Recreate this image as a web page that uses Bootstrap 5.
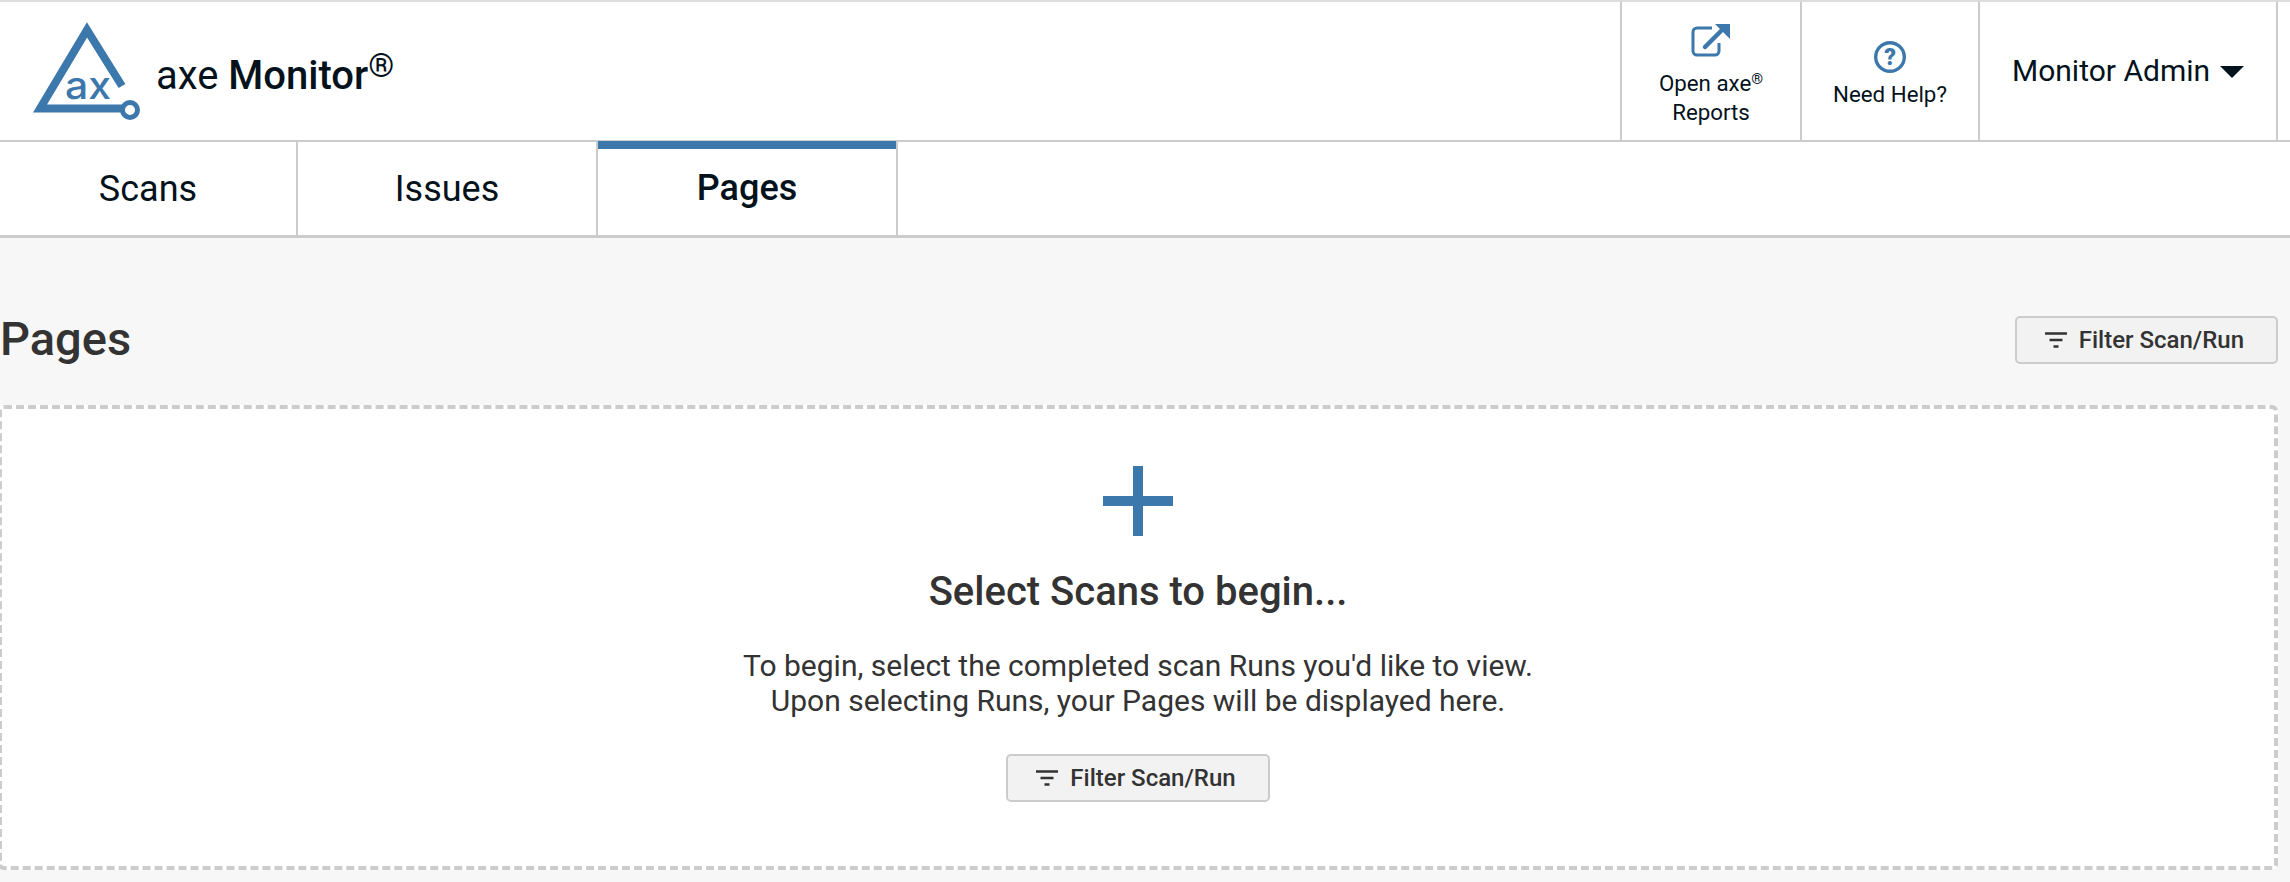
<!DOCTYPE html>
<html lang="en">
<head>
<meta charset="utf-8">
<title>axe Monitor - Pages</title>
<link rel="stylesheet" href="https://cdn.jsdelivr.net/npm/bootstrap@5.3.0/dist/css/bootstrap.min.css">
<style>
body { background:#f7f7f7; font-family:Roboto,"Liberation Sans",sans-serif; color:#333; overflow-x:hidden; }
.ax-top { background:#fff; height:142px; border-top:2px solid #ddd; border-bottom:2px solid #ccc; }
.ax-brand { padding-left:33px; gap:11px; height:100%; text-decoration:none; color:#04121c; font-size:40px; }
.ax-brand svg { margin-top:2px; }
.ax-brand-text { margin-top:10px; }
.ax-brand b { font-weight:500; }
.ax-brand sup { font-size:33px; top:-.36em; line-height:0; vertical-align:baseline; position:relative; }
.ax-cell { border-left:2px solid #ccc; color:#04121c; text-decoration:none; font-size:22.3px; line-height:29px; text-align:center; }
.ax-cell sup { font-size:15px; top:-.45em; }
.ax-open { width:180px; padding-top:21px; }
.ax-open svg { margin-bottom:12px; }
.ax-help { width:178px; padding-top:39px; }
.ax-help svg { margin-bottom:7px; }
.ax-user { width:300px; border-right:2px solid #ccc; margin-right:12px; font-size:30px; padding-left:32px; gap:10px; padding-bottom:2px; }
.ax-caret { width:0; height:0; border-left:12px solid transparent; border-right:12px solid transparent; border-top:12px solid #04121c; margin-top:4px; }
.ax-tabs { background:#fff; height:96px; border-bottom:3px solid #ccc; }
.ax-tab { width:300px; border-right:2px solid #ccc; color:#04121c; font-size:36px; text-decoration:none; height:94px; padding-bottom:1px; }
.ax-tab:first-child { width:298px; }
.ax-tab.ax-on { box-shadow:inset 0 8px 0 #3c78ab; font-weight:500; margin-top:-1px; height:95px; position:relative; }
.ax-title { font-size:47px; font-weight:500; color:#333; margin:-1px 0 1px; }
.ax-head { padding:74px 12px 37px 0; }
.ax-filter { background:#f2f2f2; border:2px solid #ccc; border-radius:5px; color:#333; font-size:24px; font-weight:500; height:48px; gap:12px; padding:0 32px 0 28px; line-height:1; }
.ax-filter:hover { background:#f2f2f2; border-color:#ccc; color:#333; }
.ax-empty { background:#fff; border:4px dashed #ccc; border-radius:6px; margin-left:-2px; margin-right:12px; height:465px; padding-top:57px; }
.ax-empty h2 { font-size:40px; font-weight:500; color:#333; margin:32px 0 0; line-height:48px; }
.ax-empty p { font-size:30px; line-height:35px; color:#333; margin:32px 0 36px; }
</style>
</head>
<body>
<header class="ax-top d-flex">
  <a class="ax-brand d-flex align-items-center flex-grow-1" href="#">
    <svg width="112" height="104" viewBox="33 20 112 104" aria-hidden="true">
      <path d="M122 86 L87 30 L40 108.500 H123" fill="none" stroke="#3c78ab" stroke-width="8"/>
      <circle cx="130" cy="110" r="7.500" fill="#fff" stroke="#3c78ab" stroke-width="5"/>
      <text x="65" y="99" font-family="Inter,Roboto,sans-serif" font-size="38" font-weight="500" fill="#3c78ab" textLength="46" lengthAdjust="spacingAndGlyphs">ax</text>
    </svg>
    <span class="ax-brand-text">axe <b>Monitor</b><sup>®</sup></span>
  </a>
  <a class="ax-cell ax-open d-block" href="#">
    <svg class="d-block mx-auto" width="40" height="34" viewBox="0 0 40 34" aria-hidden="true">
      <path d="M21 5 H6 a4 4 0 0 0 -4 4 V28 a4 4 0 0 0 4 4 H24 a4 4 0 0 0 4 -4 V20" fill="none" stroke="#3c78ab" stroke-width="3"/>
      <path d="M14 24 L30 8" stroke="#3c78ab" stroke-width="4.500" fill="none" stroke-linecap="round"/>
      <path d="M24 1 H39 V16 Z" fill="#3c78ab"/>
    </svg>
    Open axe<sup>®</sup><br>Reports
  </a>
  <a class="ax-cell ax-help d-block" href="#">
    <svg class="d-block mx-auto" width="32" height="32" viewBox="0 0 32 32" aria-hidden="true">
      <circle cx="16" cy="16" r="14.300" fill="none" stroke="#3c78ab" stroke-width="3.400"/>
      <text x="16" y="24" text-anchor="middle" font-family="Roboto,sans-serif" font-size="23" font-weight="900" fill="#3c78ab">?</text>
    </svg>
    Need Help?
  </a>
  <a class="ax-cell ax-user d-flex align-items-center" href="#">
    <span>Monitor Admin</span><span class="ax-caret"></span>
  </a>
</header>
<nav class="ax-tabs d-flex">
  <a class="ax-tab d-flex align-items-center justify-content-center" href="#">Scans</a>
  <a class="ax-tab d-flex align-items-center justify-content-center" href="#">Issues</a>
  <a class="ax-tab ax-on d-flex align-items-center justify-content-center" href="#">Pages</a>
</nav>
<main>
  <div class="ax-head d-flex align-items-center justify-content-between">
    <h1 class="ax-title">Pages</h1>
    <button type="button" class="btn ax-filter d-inline-flex align-items-center">
      <svg width="22" height="16" viewBox="0 0 22 16" aria-hidden="true"><path d="M0 1.500H22M4.500 8H17.500M8.500 14.500H13.500" stroke="#333" stroke-width="2.500"/></svg>
      <span>Filter Scan/Run</span>
    </button>
  </div>
  <section class="ax-empty text-center">
    <svg class="d-block mx-auto" width="70" height="70" viewBox="0 0 70 70" aria-hidden="true"><path d="M30 0H40V30H70V40H40V70H30V40H0V30H30Z" fill="#3c78ab"/></svg>
    <h2>Select Scans to begin...</h2>
    <p>To begin, select the completed scan Runs you'd like to view.<br>Upon selecting Runs, your Pages will be displayed here.</p>
    <button type="button" class="btn ax-filter d-inline-flex align-items-center">
      <svg width="22" height="16" viewBox="0 0 22 16" aria-hidden="true"><path d="M0 1.500H22M4.500 8H17.500M8.500 14.500H13.500" stroke="#333" stroke-width="2.500"/></svg>
      <span>Filter Scan/Run</span>
    </button>
  </section>
</main>
<script src="https://cdn.jsdelivr.net/npm/bootstrap@5.3.0/dist/js/bootstrap.bundle.min.js"></script>
</body>
</html>
